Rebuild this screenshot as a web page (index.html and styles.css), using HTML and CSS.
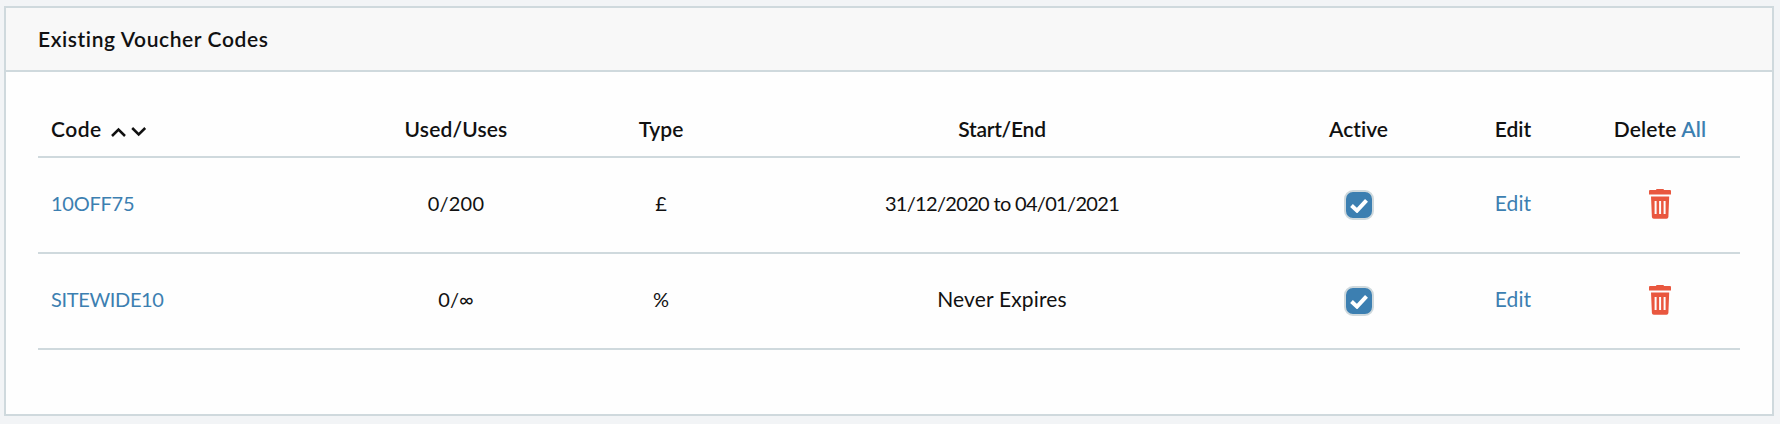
FILE: index.html
```html
<!DOCTYPE html>
<html lang="en">
<head>
<meta charset="utf-8">
<title>Voucher Codes</title>
<link rel="stylesheet" href="styles.css">
</head>
<body>
<svg class="sprite" aria-hidden="true">
  <symbol id="trash" viewBox="0 0 22 30">
    <path fill-rule="evenodd" d="M8 0h6q1 0 1 1h6q1 0 1 1v3.4H0V2q0-1 1-1h6q0-1 1-1zM2 7.6h18.2L19.4 28q-.1 1.700-1.900 1.700h-12.700q-1.800 0-1.900-1.700zM5.600 12v13H7.600V12zM10.100 12v13h2V12zM14.600 12v13h2V12z"/>
  </symbol>
  <symbol id="check" viewBox="0 0 18 15">
    <path d="M1.500 7.500L7 12.600L16.500 2.300"/>
  </symbol>
</svg>
<section class="card">
  <header class="card-header"><h2 class="title">Existing Voucher Codes</h2></header>
  <div class="card-body">
    <table class="vouchers">
      <colgroup><col class="c-code"><col class="c-used"><col class="c-type"><col class="c-dates"><col class="c-active"><col class="c-edit"><col class="c-delete"></colgroup>
      <thead>
        <tr>
          <th class="code"><span class="t-code">Code</span><svg class="sort" viewBox="0 0 36 10"><path d="M1 9L7.500 2.500L14 9M21.200 1L27.700 7.500L34.200 1"/></svg></th>
          <th><span class="t-used">Used/Uses</span></th>
          <th>Type</th>
          <th><span class="t-start">Start/End</span></th>
          <th>Active</th>
          <th>Edit</th>
          <th><span class="t-used">Delete <a href="#">All</a></span></th>
        </tr>
      </thead>
      <tbody>
        <tr>
          <td class="code"><a href="#" class="v-off">10OFF75</a></td>
          <td><span class="v-used">0/200</span></td>
          <td>£</td>
          <td><span class="v-dates">31/12/2020 to 04/01/2021</span></td>
          <td class="icon"><span class="checkbox"><svg><use href="#check"/></svg></span></td>
          <td><a href="#" class="v-word">Edit</a></td>
          <td class="icon"><svg class="trash"><use href="#trash"/></svg></td>
        </tr>
        <tr>
          <td class="code"><a href="#" class="v-site">SITEWIDE10</a></td>
          <td>0/∞</td>
          <td>%</td>
          <td><span class="v-word">Never Expires</span></td>
          <td class="icon"><span class="checkbox"><svg><use href="#check"/></svg></span></td>
          <td><a href="#" class="v-word">Edit</a></td>
          <td class="icon"><svg class="trash"><use href="#trash"/></svg></td>
        </tr>
      </tbody>
    </table>
  </div>
</section>
</body>
</html>
```
FILE: styles.css
```css
* { box-sizing: border-box; }
body {
  margin: 0;
  padding: 6px 6px 8px 4px;
  background: #f2f4f6;
  color: #111;
  font: 20px/28px Lato, "Open Sans", sans-serif;
}
a { color: #3c7fb1; text-decoration: none; }
.sprite { display: none; }
.card {
  height: 410px;
  border: 2px solid #cfd9dd;
  background: #fefefe;
}
.card-header {
  display: flex;
  align-items: center;
  height: 64px;
  padding: 0 32px 1px;
  border-bottom: 2px solid #cfd9dd;
  background: #f8f8f8;
}
.title { margin: 0; font-size: 21px; font-weight: 600; letter-spacing: 0.6px; }
.card-body { padding: 30px 32px; }
.vouchers { width: 1702px; table-layout: fixed; border-collapse: separate; border-spacing: 0; }
.c-code { width: 285px; }
.c-used { width: 266px; }
.c-type { width: 144px; }
.c-dates { width: 538px; }
.c-active { width: 175px; }
.c-edit { width: 134px; }
.c-delete { width: 160px; }
th, td { padding: 0; border-bottom: 2px solid #cfd9dd; text-align: center; vertical-align: middle; white-space: nowrap; }
th { height: 56px; font-size: 21px; font-weight: 600; font-variant-ligatures: none; }
td { height: 96px; padding-bottom: 5px; }
.icon { padding-bottom: 0; line-height: 0; }
.code { padding-left: 13px; text-align: left; }
.t-code { letter-spacing: 0.5px; }
.t-used { letter-spacing: 0.15px; }
.t-start { letter-spacing: -0.25px; }
.v-off { letter-spacing: -0.25px; }
.v-used { letter-spacing: 0.2px; }
.v-dates { letter-spacing: -0.68px; }
.v-site { letter-spacing: -0.35px; }
.v-word { font-size: 21px; letter-spacing: 0.15px; }
.sort { width: 36px; height: 10px; margin-left: 9px; overflow: visible; fill: none; stroke: #111; stroke-width: 2.5px; }
.checkbox {
  display: inline-flex;
  align-items: center;
  justify-content: center;
  width: 30px;
  height: 30px;
  border: 2px solid #cfd9dd;
  border-radius: 9px;
  background: #3c7fb1;
  vertical-align: middle;
}
.checkbox svg { width: 18px; height: 15px; fill: none; stroke: #fff; stroke-width: 4px; }
.trash { width: 22px; height: 30px; margin-bottom: 3px; fill: #e9573f; vertical-align: middle; }
```
